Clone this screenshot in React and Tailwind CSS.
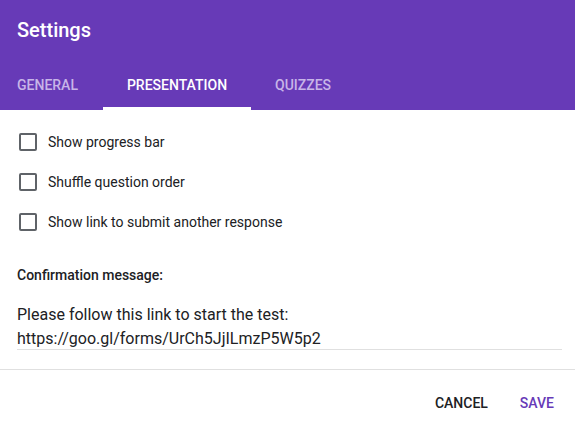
export default function App() {
  const items = ["Show progress bar", "Shuffle question order", "Show link to submit another response"];
  return (
    <div className="w-[575px] h-[426px] bg-white overflow-hidden" style={{ fontFamily: "Roboto, 'Liberation Sans', sans-serif" }}>
      <div className="bg-[#673ab7] h-[110px] flex flex-col">
        <div className="h-[60px] flex items-center pl-[17px] text-white text-[20px] font-medium">Settings</div>
        <div className="flex h-[50px]">
          <div className="w-[103px] flex items-center pl-[17px] pt-[1px] text-[14px] font-medium text-[#c8b5e8]">GENERAL</div>
          <div className="w-[148px] flex items-center justify-center text-[14px] font-medium text-white border-b-[3px] border-white pt-[4px]">PRESENTATION</div>
          <div className="flex items-center pl-[24px] pt-[1px] text-[14px] font-medium text-[#c8b5e8]">QUIZZES</div>
        </div>
      </div>
      <div className="pt-[12px] flex flex-col">
        {items.map((t) => (
          <div key={t} className="h-[40px] flex items-center pl-[19px]">
            <div className="w-[18px] h-[18px] border-2 border-[#5f6368] rounded-[2px]" />
            <span className="ml-[11px] text-[14px] text-[#202124]">{t}</span>
          </div>
        ))}
      </div>
      <div className="pl-[17px] pt-[23px] text-[14px] font-medium text-[#202124]">Confirmation message:</div>
      <div className="mx-[17px] mt-[17px] border-b border-[#e0e0e0] text-[16px] leading-[24px] text-[#202124] mr-[13px]">
        <div>Please follow this link to start the test:</div>
        <div className="-mb-[2px]">https://goo.gl/forms/UrCh5JjILmzP5W5p2</div>
      </div>
      <div className="mt-[19px] border-t border-[#e0e0e0] flex justify-end items-center h-[68px] pr-[21px] gap-[32px]">
        <span className="text-[14px] font-medium text-[#202124]">CANCEL</span>
        <span className="text-[14px] font-medium text-[#673ab7]">SAVE</span>
      </div>
    </div>
  );
}
